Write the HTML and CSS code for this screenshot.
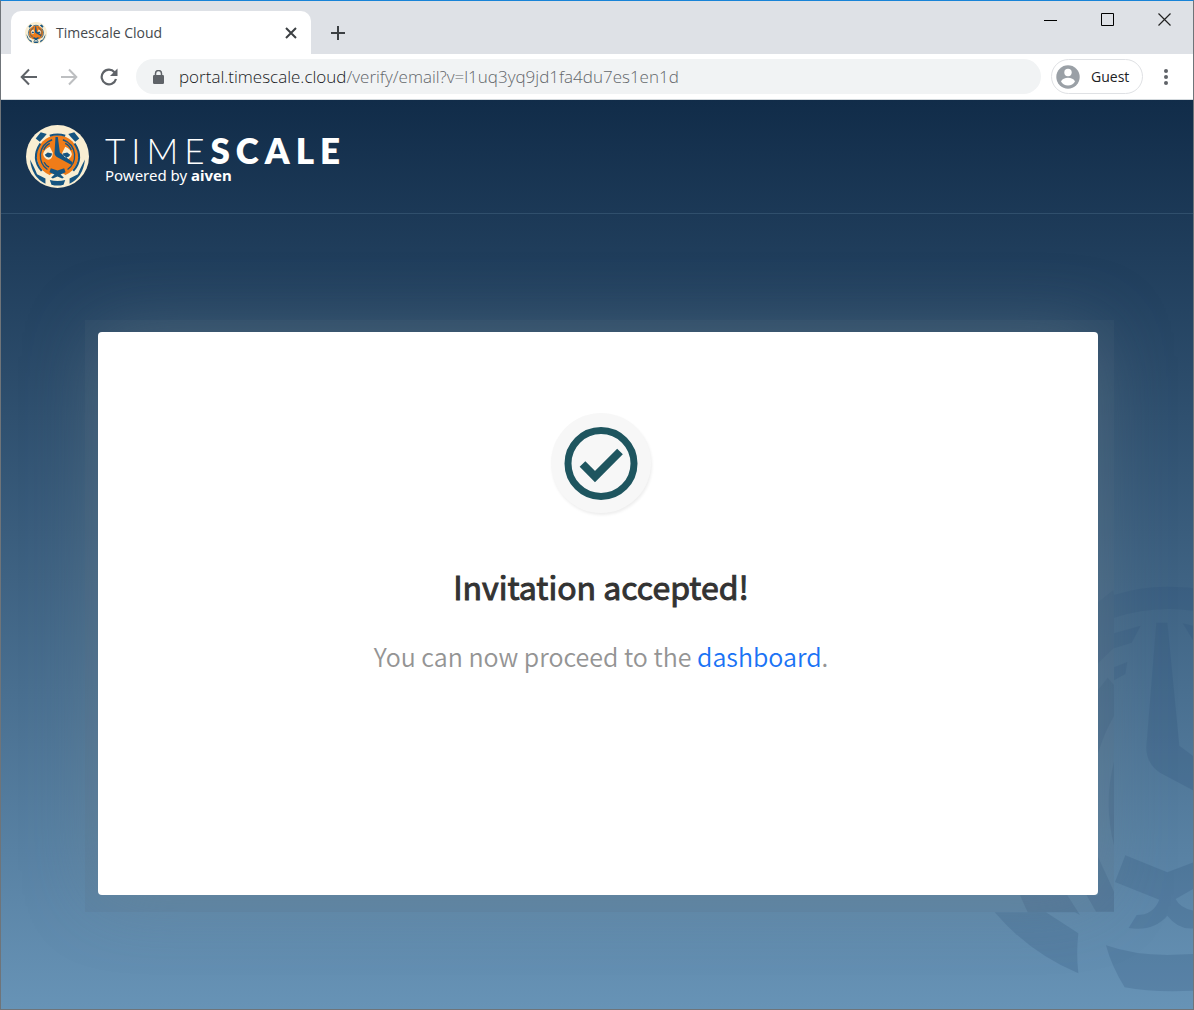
FILE: index.html
```html
<!DOCTYPE html>
<html lang="en">
<head>
<meta charset="utf-8">
<title>Timescale Cloud</title>
<meta name="viewport" content="width=device-width, initial-scale=1">
<link rel="stylesheet" href="styles.css">
</head>
<body>
<svg class="defs" aria-hidden="true">
  <symbol id="tiger" viewBox="19 21 188 188">
    <circle cx="113" cy="115" r="94" fill="#f9eed2"/>
    <path fill="#165480" d="M48 61 63 43 81 48 74 56 60 71ZM178 61 163 43 145 48 152 56 166 71ZM31 124Q45 150 52 168L77 181V196Q37 178 31 124ZM195 124Q181 150 174 168L149 181V196Q189 178 195 124Z"/>
    <circle cx="113" cy="113" r="62" fill="#f07c18"/>
    <path fill="none" stroke="#165480" stroke-width="6" d="M90 53Q113 45 136 53M62 76Q33 120 66 158M164 76Q193 120 160 158"/>
    <path fill="none" stroke="#165480" stroke-width="4" d="M97 65Q66 76 62 108Q60 138 83 154M129 65Q160 76 164 108Q166 138 143 154M73 132Q78 142 88 147M90 76Q76 83 72 96M136 76Q150 83 154 96"/>
    <path fill="#f9eed2" d="M70 108Q74 92 90 86L99 104Q98 125 85 125 73 121 70 108ZM156 108Q152 92 136 86L127 104Q128 125 141 125 153 121 156 108ZM92 168 113 158 134 168 143 186 137 203H89L83 186Z"/>
    <path fill="#165480" d="M75 110 84 103 97 106Q95 118 86 118 77 117 75 110ZM151 110 142 103 129 106Q131 118 140 118 149 117 151 110ZM107 57H114L120 103 158 132 155 140 110 116Q104 112 104 105ZM93 150 113 157 133 150 137 162 122 169 132 178 127 181 113 175 99 181 94 178 104 169 89 162ZM90 185Q113 191 136 185L131 199Q113 204 95 199Z"/>
  </symbol>
</svg>
<div class="window">
  <div class="tabstrip">
    <div class="tab">
      <svg class="favicon" aria-hidden="true"><use href="#tiger"/></svg>
      <span class="tab-title">Timescale Cloud</span>
      <button class="icon-button tab-close" aria-label="Close tab"><svg width="12" height="12" viewBox="0 0 12 12"><path d="m1 1 10 10M11 1 1 11" stroke="#3c4043" stroke-width="2"/></svg></button>
    </div>
    <button class="icon-button new-tab" aria-label="New tab"><svg width="16" height="16" viewBox="0 0 16 16"><path d="M8 1v14M1 8h14" stroke="#3c4043" stroke-width="2"/></svg></button>
    <div class="window-controls">
      <button class="icon-button" aria-label="Minimize"><svg width="14" height="14" viewBox="0 0 14 14"><path d="M0 7.500h13" stroke="#000"/></svg></button>
      <button class="icon-button" aria-label="Maximize"><svg width="14" height="14" viewBox="0 0 14 14"><path d="M.5.5h12v12H.5z" fill="none" stroke="#000"/></svg></button>
      <button class="icon-button" aria-label="Close"><svg width="14" height="14" viewBox="0 0 14 14"><path d="m.5.5 12 12M12.500.500.500 12.500" stroke="#222" stroke-width="1.200"/></svg></button>
    </div>
  </div>
  <div class="toolbar">
    <button class="icon-button nav" aria-label="Back"><svg width="18" height="18" viewBox="0 0 18 18"><path d="M17 9H2M9 1.500 1.700 9 9 16.500" fill="none" stroke="#5f6368" stroke-width="2"/></svg></button>
    <button class="icon-button nav" aria-label="Forward"><svg width="18" height="18" viewBox="0 0 18 18"><path d="M1 9h15M9 1.500 16.300 9 9 16.500" fill="none" stroke="#bdbfc1" stroke-width="2"/></svg></button>
    <button class="icon-button nav" aria-label="Reload"><svg width="18" height="18" viewBox="0 0 18 18"><path d="M16 11A7.300 7.300 0 1 1 14.500 4.200" fill="none" stroke="#5f6368" stroke-width="2.200"/><path d="M17.500.500V8H10z" fill="#5f6368"/></svg></button>
    <div class="address">
      <svg width="11" height="14" viewBox="0 0 11 14" aria-hidden="true"><rect y="5" width="11" height="9" rx="1.200" fill="#5f6368"/><path d="M2.500 6V3.500a3 3 0 0 1 6 0V6" fill="none" stroke="#5f6368" stroke-width="1.500"/></svg>
      <span class="url"><span class="host">portal.timescale.cloud</span>/verify/email?v=l1uq3yq9jd1fa4du7es1en1d</span>
    </div>
    <button class="profile"><svg width="24" height="24" viewBox="0 0 24 24" aria-hidden="true"><circle cx="12" cy="12" r="11.700" fill="#9aa0a6"/><circle cx="12" cy="7.500" r="3.700" fill="#fff"/><path d="M5 16.500C6 14 9 12.800 12 12.800s6 1.200 7 3.700C17.500 19 15 20.400 12 20.400S6.500 19 5 16.500Z" fill="#fff"/></svg>Guest</button>
    <button class="icon-button menu" aria-label="Menu"><svg width="4" height="16" viewBox="0 0 4 16"><g fill="#5f6368"><circle cx="2" cy="2" r="2"/><circle cx="2" cy="8" r="2"/><circle cx="2" cy="14" r="2"/></g></svg></button>
  </div>
  <div class="page">
    <header class="site-header">
      <svg class="logo" aria-hidden="true"><use href="#tiger"/></svg>
      <div class="brand">
        <div class="wordmark">TIME<b>SCALE</b></div>
        <div class="powered">Powered by <b>aiven</b></div>
      </div>
    </header>
    <main class="content">
      <svg class="watermark" width="213" height="439" viewBox="0 0 639 1317" aria-hidden="true">
        <path d="M354 97 400 60 402 75Q480 50 562 50 610 50 642 55V123Q600 116 562 117 480 118 402 143V233L354 280ZM402 190 482 167 455 218 402 235ZM402 292 442 276 436 312 402 331ZM354 360 383 323 402 345V438Q372 490 354 550ZM402 575Q370 700 402 826ZM529 158H562L598 527 642 560V662L540 608Q498 580 499 530ZM608 160 642 168V215ZM436 856 562 907 642 876V955L587 987Q600 1015 642 1022V1075Q595 1080 562 1037 520 1085 446 1074L470 1035Q520 1035 538 989L405 936ZM378 1126Q460 1155 562 1155L642 1152V1262Q520 1268 434 1252 395 1190 378 1126ZM44 1027H198L295 1090Q288 1150 295 1210 150 1150 44 1027ZM120 976H262L300 1035 285 1027H143ZM354 860 402 965V1025H348L320 976H354Z"/>
      </svg>
      <div class="frame">
        <section class="card">
          <div class="badge"><svg width="74" height="74" viewBox="0 0 74 74" aria-hidden="true"><circle cx="37" cy="37.500" r="33" fill="none" stroke="#1e555f" stroke-width="7"/><path d="m18.500 38 12.500 12.500 25-25" fill="none" stroke="#1e555f" stroke-width="8"/></svg></div>
          <h1>Invitation accepted!</h1>
          <p>You can now proceed to the <a href="#dashboard">dashboard</a>.</p>
        </section>
      </div>
    </main>
  </div>
</div>
</body>
</html>
```
FILE: styles.css
```css
* { box-sizing: border-box; }
body {
  margin: 0;
  font-family: "Open Sans", "Noto Sans", sans-serif;
}
svg { display: block; flex: none; }
.defs { position: absolute; width: 0; height: 0; }
.window {
  display: flex;
  flex-direction: column;
  min-height: 100vh;
  border: 1px solid #6f7479;
  border-top-color: #1883d7;
}
.icon-button {
  display: flex;
  align-items: center;
  justify-content: center;
  padding: 0;
  border: 0;
  background: none;
}

/* Tab strip */
.tabstrip {
  display: flex;
  height: 53px;
  padding-left: 10px;
  background: #dee1e6;
}
.tab {
  display: flex;
  align-items: center;
  width: 300px;
  margin-top: 10px;
  padding: 0 14px;
  border-radius: 10px 10px 0 0;
  background: #fff;
}
.favicon { width: 22px; height: 22px; }
.tab-title {
  flex: 1;
  margin-left: 9px;
  font-size: 14px;
  color: #45494d;
}
.new-tab { width: 54px; margin-top: 10px; }
.window-controls {
  display: flex;
  height: 37px;
  margin-left: auto;
}
.window-controls .icon-button { width: 57px; }

/* Toolbar */
.toolbar {
  display: flex;
  align-items: center;
  height: 46px;
  padding: 0 9px 0 8px;
  border-bottom: 1px solid #d3d9dd;
  background: #fff;
}
.nav { width: 40px; height: 40px; }
.address {
  display: flex;
  flex: 1;
  align-items: center;
  gap: 15px;
  height: 35px;
  margin: 0 10px 0 7px;
  padding-left: 17px;
  border-radius: 18px;
  background: #f1f3f4;
}
.url { font-size: 17px; font-weight: 350; color: #63676b; white-space: nowrap; }
.host { color: #181a1d; }
.profile {
  display: flex;
  align-items: center;
  gap: 11px;
  height: 35px;
  width: 92px;
  padding: 0 0 0 4px;
  border: 1px solid #dfe1e4;
  border-radius: 18px;
  background: #fff;
  font: 14px "Open Sans", "Noto Sans", sans-serif;
  color: #202124;
}
.menu { width: 36px; height: 36px; margin-left: 5px; }

/* Page */
.page {
  display: flex;
  flex: 1;
  flex-direction: column;
  background: linear-gradient(#112c49, #6793b6);
}
.site-header {
  display: flex;
  align-items: center;
  gap: 16px;
  height: 114px;
  padding: 0 25px;
  border-bottom: 1px solid #304f6c;
  color: #fff;
}
.logo { width: 63px; height: 63px; }
.wordmark {
  font: 300 35px/36px Lato, sans-serif;
  letter-spacing: 6px;
}
.wordmark b { font-weight: 800; }
.powered { font: 15px/14px "Noto Sans", sans-serif; }

.content {
  position: relative;
  display: flex;
  flex: 1;
  overflow: hidden;
  padding: 106px 79px 97px 84px;
}
.watermark {
  position: absolute;
  right: 0;
  bottom: 0;
  fill: #2c5078;
  opacity: .22;
}
.frame {
  position: relative;
  display: flex;
  flex: 1;
  padding: 12px 16px 17px 13px;
  background: rgb(88 108 124 / .14);
}
.card {
  display: flex;
  flex: 1;
  flex-direction: column;
  align-items: center;
  padding: 81px 24px 24px 30px;
  border-radius: 4px;
  background: #fff;
  box-shadow: 0 0 72px rgb(122 140 150 / .36);
  font-family: "Noto Sans CJK SC", sans-serif;
  text-align: center;
}
.badge {
  display: flex;
  align-items: center;
  justify-content: center;
  width: 100px;
  height: 100px;
  border-radius: 50%;
  background: #f7f7f7;
  box-shadow: 1px 2px 3px rgb(0 0 0 / .07);
}
h1 {
  margin: 48px 0 0;
  font-size: 32px;
  line-height: 50px;
  font-weight: 400;
  -webkit-text-stroke: 1px #333;
  color: #333;
}
p {
  margin: 25px 0 0;
  font-size: 25px;
  line-height: 40px;
  font-weight: 350;
  color: #949494;
}
a { color: #1a73f5; text-decoration: none; }
```
